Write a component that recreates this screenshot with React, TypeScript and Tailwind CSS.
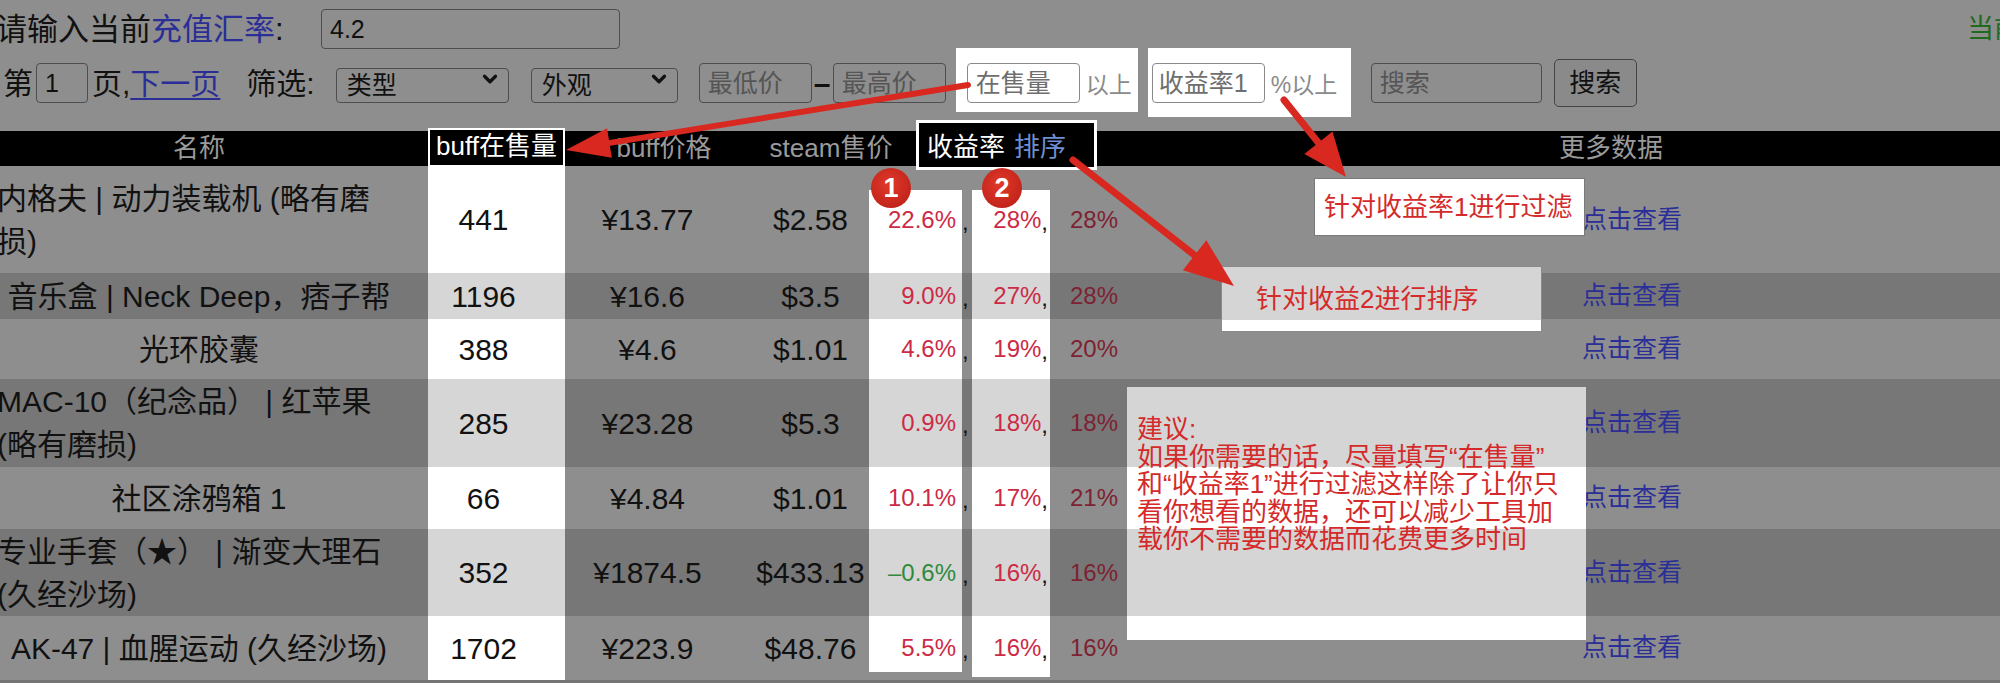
import React from 'react';
import { ChevronDown } from 'lucide-react';

type Row = {
  name: string[];
  count: string;
  price: string;
  steam: string;
  p1: string;
  p2: string;
  p3: string;
  dark: boolean;
  h: string;
  neg?: boolean;
};

const rows: Row[] = [
  { name: ['内格夫 | 动力装载机 (略有磨', '损)'], count: '441', price: '¥13.77', steam: '$2.58', p1: '22.6%', p2: '28%', p3: '28%', dark: false, h: 'h-[107px]' },
  { name: ['音乐盒 | Neck Deep，痞子帮'], count: '1196', price: '¥16.6', steam: '$3.5', p1: '9.0%', p2: '27%', p3: '28%', dark: true, h: 'h-[46px]' },
  { name: ['光环胶囊'], count: '388', price: '¥4.6', steam: '$1.01', p1: '4.6%', p2: '19%', p3: '20%', dark: false, h: 'h-[60px]' },
  { name: ['MAC-10（纪念品） | 红苹果', '(略有磨损)'], count: '285', price: '¥23.28', steam: '$5.3', p1: '0.9%', p2: '18%', p3: '18%', dark: true, h: 'h-[88px]' },
  { name: ['社区涂鸦箱 1'], count: '66', price: '¥4.84', steam: '$1.01', p1: '10.1%', p2: '17%', p3: '21%', dark: false, h: 'h-[62px]' },
  { name: ['专业手套（★） | 渐变大理石', '(久经沙场)'], count: '352', price: '¥1874.5', steam: '$433.13', p1: '–0.6%', p2: '16%', p3: '16%', dark: true, h: 'h-[87px]', neg: true },
  { name: ['AK-47 | 血腥运动 (久经沙场)'], count: '1702', price: '¥223.9', steam: '$48.76', p1: '5.5%', p2: '16%', p3: '16%', dark: false, h: 'h-[64px]' },
];

// red annotation arrow with a filled head
const Arrow = ({ x1, y1, x2, y2, head = 44, half = 16, w = 6 }: { x1: number; y1: number; x2: number; y2: number; head?: number; half?: number; w?: number }) => {
  const dx = x2 - x1;
  const dy = y2 - y1;
  const len = Math.sqrt(dx * dx + dy * dy);
  const ux = dx / len;
  const uy = dy / len;
  const bx = x2 - ux * head;
  const by = y2 - uy * head;
  const px = -uy * half;
  const py = ux * half;
  return (
    <g>
      <line x1={x1} y1={y1} x2={bx + ux * 4} y2={by + uy * 4} stroke="#d8281f" strokeWidth={w} strokeLinecap="round" />
      <polygon points={`${x2},${y2} ${bx + px},${by + py} ${bx - px},${by - py}`} fill="#d8281f" />
    </g>
  );
};

const inputBase =
  'h-[40px] rounded-[4px] border-[1.5px] border-[#4d4d4d] bg-transparent px-[8px] text-[25px] text-[#111] outline-none placeholder:text-[#555]';

export default function App() {
  return (
    <div className="relative w-[2000px] h-[683px] overflow-hidden bg-[#8e8e8e] font-['Liberation_Sans','Noto_Sans_CJK_SC',sans-serif] text-[#111]">
      {/* rate row */}
      <div className="flex items-center h-[38px] mt-[10px] whitespace-nowrap">
        <span className="w-[325px] -ml-[4px] shrink-0 text-[31px] leading-none">
          请输入当前<span className="text-[#2a2e96]">充值汇率</span>:
        </span>
        <input defaultValue="4.2" className={inputBase + ' w-[299px] h-[38px] shrink-0'} />
        <span className="ml-[1347px] shrink-0 text-[27px] text-[#1e6a1e]">当前汇率</span>
      </div>

      {/* filter row */}
      <div className="flex items-center h-[70px] whitespace-nowrap text-[30px]">
        <span className="ml-[3px]">第</span>
        <input defaultValue="1" className={inputBase + ' ml-[3px] w-[52px] shrink-0'} />
        <span className="ml-[4px]">页,</span>
        <span className="text-[#2a2e96] underline underline-offset-[4px] decoration-[2px]">下一页</span>
        <span className="ml-[26px]">筛选:</span>
        <div className="relative ml-[21px] shrink-0">
          <select className="appearance-none w-[173px] h-[35px] rounded-[4px] border-[1.5px] border-[#4d4d4d] bg-transparent pl-[10px] text-[25px] leading-none">
            <option>类型</option>
          </select>
          <ChevronDown className="absolute right-[8px] top-[7px] pointer-events-none" size={22} strokeWidth={3.5} color="#111" />
        </div>
        <div className="relative ml-[22px] shrink-0">
          <select className="appearance-none w-[147px] h-[35px] rounded-[4px] border-[1.5px] border-[#4d4d4d] bg-transparent pl-[10px] text-[25px] leading-none">
            <option>外观</option>
          </select>
          <ChevronDown className="absolute right-[8px] top-[7px] pointer-events-none" size={22} strokeWidth={3.5} color="#111" />
        </div>
        <input placeholder="最低价" className={inputBase + ' ml-[21px] w-[113px] shrink-0'} />
        <span className="w-[21px] text-center font-bold">–</span>
        <input placeholder="最高价" className={inputBase + ' w-[113px] shrink-0'} />

        <div className="self-start ml-[10px] w-[182px] h-[64px] shrink-0 bg-white flex items-start pt-[15px]">
          <input placeholder="在售量" className="ml-[11px] w-[113px] h-[40px] shrink-0 rounded-[4px] border-[1.5px] border-[#8a8a8a] bg-white px-[8px] text-[25px] outline-none placeholder:text-[#6e6e6e]" />
          <span className="ml-[6px] mt-[5px] text-[23px] text-[#8a8a8a]">以上</span>
        </div>
        <div className="self-start ml-[10px] w-[203px] h-[69px] shrink-0 bg-white flex items-start pt-[15px]">
          <input placeholder="收益率1" className="ml-[4px] w-[113px] h-[40px] shrink-0 rounded-[4px] border-[1.5px] border-[#8a8a8a] bg-white px-[6px] text-[25px] outline-none placeholder:text-[#6e6e6e]" />
          <span className="ml-[6px] mt-[5px] text-[23px] text-[#8a8a8a]">%以上</span>
        </div>

        <input placeholder="搜索" className={inputBase + ' ml-[20px] w-[171px] shrink-0'} />
        <button className="ml-[12px] w-[83px] h-[48px] shrink-0 rounded-[5px] border-[1.5px] border-[#444] bg-[#8a8a8a] text-[26px]">搜索</button>
      </div>

      {/* table */}
      <div className="mt-[13px] -ml-[30px] w-[2060px]">
        <div className="flex h-[35px] bg-black text-[26px] text-[#9a9a9a] leading-[35px] whitespace-nowrap">
          <div className="w-[458px] shrink-0 text-center">名称</div>
          <div className="w-[137px] shrink-0 self-start -mt-[3px] h-[39px] border-2 border-white bg-black text-white text-center leading-[33px] relative z-10">buff在售量</div>
          <div className="w-[198px] shrink-0 text-center">buff价格</div>
          <div className="w-[136px] shrink-0 text-center">steam售价</div>
          <div className="w-[17px] shrink-0" />
          <div className="w-[181px] shrink-0 self-start -mt-[11px] h-[50px] border-[3px] border-white bg-black flex items-center pl-[8px] pt-[4px] relative z-10">
            <span className="text-white">收益率</span>
            <span className="ml-[9px] text-[#6f8fd2]">排序</span>
          </div>
          <div className="flex-1 pl-[462px]">更多数据</div>
        </div>

        {rows.map((r, i) => {
          const hl = r.dark ? 'bg-[#d6d6d6]' : 'bg-white';
          const first = i === 0;
          const last = i === rows.length - 1;
          const box1 = first
            ? 'bg-[linear-gradient(to_bottom,transparent_24px,#ffffff_24px)]'
            : last
            ? 'bg-[linear-gradient(to_bottom,#ffffff_56px,transparent_56px)]'
            : hl;
          const box2 = first
            ? 'bg-[linear-gradient(to_bottom,transparent_24px,#ffffff_24px)]'
            : last
            ? 'bg-[linear-gradient(to_bottom,#ffffff_61px,transparent_61px)]'
            : hl;
          return (
            <div key={i} className={'flex items-stretch whitespace-nowrap ' + r.h + ' ' + (r.dark ? 'bg-[#777777]' : 'bg-[#8e8e8e]')}>
              {r.name.length > 1 ? (
                <div className="w-[458px] shrink-0 flex flex-col justify-center pl-[27px] text-[30px] leading-[43px]">
                  {r.name.map((l, j) => (
                    <span key={j}>{l}</span>
                  ))}
                </div>
              ) : (
                <div className="w-[458px] shrink-0 flex items-center justify-center text-[30px]">{r.name[0]}</div>
              )}
              <div className={'w-[137px] shrink-0 flex items-center justify-center pr-[26px] text-[30px] ' + hl}>{r.count}</div>
              <div className="w-[165px] shrink-0 flex items-center justify-center text-[30px]">{r.price}</div>
              <div className="w-[139px] shrink-0 flex items-center justify-center pl-[22px] text-[30px]">{r.steam}</div>
              <div className={'w-[93px] shrink-0 flex items-center justify-end pr-[6px] text-[24px] ' + box1}>
                <span className={r.neg ? 'text-[#2f8a3c]' : 'text-[#cc2a46]'}>{r.p1}</span>
              </div>
              <div className="w-[10px] shrink-0 flex items-center text-[24px] pt-[4px]">,</div>
              <div className={'w-[78px] shrink-0 flex items-center justify-end pr-[2px] text-[24px] ' + box2}>
                <span className="text-[#cc2a46]">{r.p2}</span>
                <span className="pt-[4px]">,</span>
              </div>
              <div className="w-[80px] shrink-0 flex items-center pl-[20px] text-[24px] text-[#7d2232]">{r.p3}</div>
              <div className="ml-[452px] flex items-center text-[25px] text-[#2a2e96]">点击查看</div>
            </div>
          );
        })}
        <div className="h-[3px] bg-[#747474]" />
      </div>

      {/* numbered markers */}
      <div className="absolute left-[871px] top-[168px] w-[40px] h-[40px] rounded-full bg-[radial-gradient(circle_at_45%_40%,#e0392b,#b81c14)] text-white text-[27px] font-bold flex items-center justify-center z-20">1</div>
      <div className="absolute left-[982px] top-[168px] w-[40px] h-[40px] rounded-full bg-[radial-gradient(circle_at_45%_40%,#e0392b,#b81c14)] text-white text-[27px] font-bold flex items-center justify-center z-20">2</div>

      {/* callouts */}
      <div className="absolute left-[1314px] top-[178px] w-[271px] h-[58px] bg-white border border-[#7a7a7a] flex items-center pl-[9px] text-[26px] text-[#d42a2a] whitespace-nowrap z-20">
        针对收益率1进行过滤
      </div>
      <div className="absolute left-[1221px] top-[266px] w-[321px] h-[66px] bg-[linear-gradient(to_bottom,#d5d5d5_53px,#ffffff_53px)] border border-[#8a8a8a] flex items-center pl-[34px] text-[26px] text-[#d42a2a] whitespace-nowrap z-20">
        针对收益2进行排序
      </div>
      <div className="absolute left-[1127px] top-[387px] w-[459px] h-[253px] bg-[linear-gradient(to_bottom,#d5d5d5_80px,#ffffff_80px,#ffffff_142px,#d5d5d5_142px,#d5d5d5_229px,#ffffff_229px)] pl-[10px] pt-[29px] text-[26px] leading-[27.5px] text-[#d42a2a] whitespace-nowrap z-20">
        <div>建议:</div>
        <div>如果你需要的话，尽量填写“在售量”</div>
        <div>和“收益率1”进行过滤这样除了让你只</div>
        <div>看你想看的数据，还可以减少工具加</div>
        <div>载你不需要的数据而花费更多时间</div>
      </div>

      {/* arrows */}
      <svg className="absolute inset-0 pointer-events-none z-30" width="2000" height="683" viewBox="0 0 2000 683">
        <Arrow x1={968} y1={85} x2={566} y2={150} head={44} half={15} w={6} />
        <Arrow x1={1284} y1={100} x2={1346} y2={177} head={44} half={18} w={7} />
        <Arrow x1={1073} y1={160} x2={1234} y2={286} head={50} half={19} w={7} />
      </svg>
    </div>
  );
}
